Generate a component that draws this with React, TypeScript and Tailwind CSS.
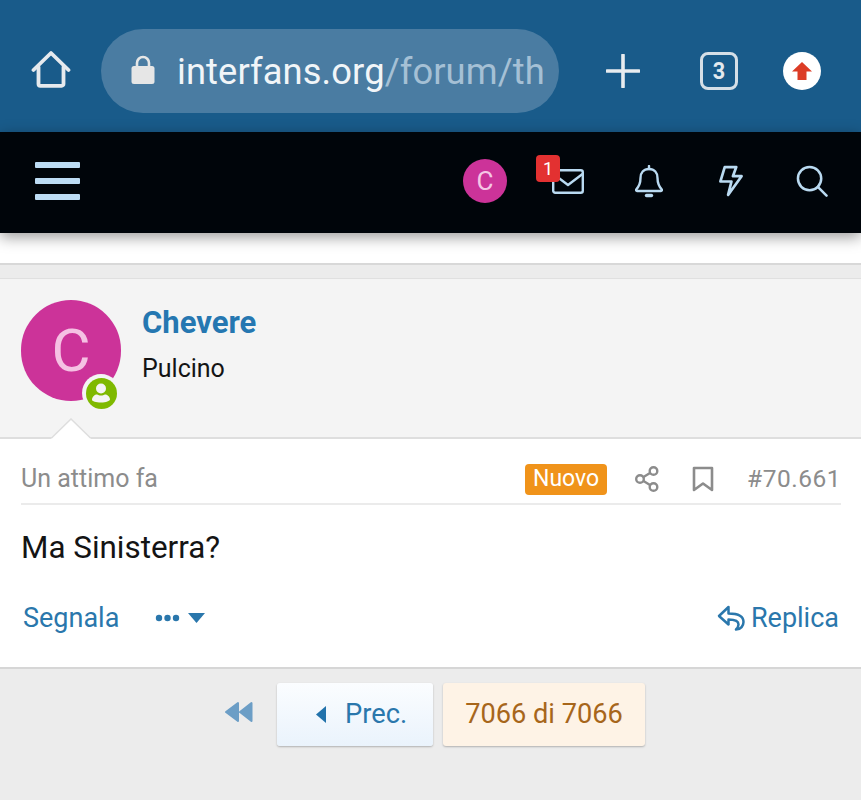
import React from 'react';

function BrowserBar() {
  return (
    <div className="h-[132px] bg-[#195b8a] flex items-center shrink-0 pt-[10px]">
      <div className="w-[101px] flex justify-center">
        <svg width="40" height="40" viewBox="0 0 40 40" fill="none" stroke="#e6eaee" strokeWidth="3.800" strokeLinejoin="round" strokeLinecap="round" className="mt-[-2px]">
          <path d="M2.500 20 20 3l17.500 17" />
          <path d="M7.500 17v17a1.800 1.800 0 0 0 1.800 1.800h21.400a1.800 1.800 0 0 0 1.800-1.800V17" />
        </svg>
      </div>
      <div className="w-[458px] h-[84px] rounded-[42px] bg-[#4a7ca2] flex items-center pl-[30px] overflow-hidden">
        <svg width="24" height="32" viewBox="0 0 24 32" className="shrink-0 mt-[-2px]">
          <path d="M6 14V9a6 6 0 0 1 12 0v5" fill="none" stroke="#e6e6e6" strokeWidth="2.600" />
          <rect x="0.500" y="12" width="23" height="18" rx="2.500" fill="#e6e6e6" />
        </svg>
        <div className="ml-[22px] text-[36.300px] leading-none whitespace-nowrap text-[#f1f5f8] tracking-[0.1px] pt-[3px]">
          interfans.org<span className="text-[#a5c0d5]">/forum/th</span>
        </div>
      </div>
      <div className="w-[128px] flex justify-center">
        <svg width="34" height="34" viewBox="0 0 34 34" stroke="#e8ecef" strokeWidth="3.600" strokeLinecap="round">
          <path d="M17 1v32M1 17h32" />
        </svg>
      </div>
      <div className="w-[38px] h-[38px] rounded-[8px] border-[3.500px] border-[#d5dfe7] flex items-center justify-center text-[#e3e9ee] ml-[13px]">
        <span className="text-[24px] leading-none font-bold scale-x-[0.9]">3</span>
      </div>
      <div className="ml-[45px] w-[38px] h-[38px] rounded-full bg-white flex items-center justify-center">
        <svg width="20" height="18" viewBox="0 0 20 18">
          <path d="M10 0 20 9.500h-5.500V18h-9V9.500H0z" fill="#dc3c26" />
        </svg>
      </div>
    </div>
  );
}

function NavBar() {
  return (
    <div className="h-[101px] bg-[#00050a] flex items-center shrink-0 relative pb-[3px] shadow-[0_4px_14px_rgba(0,0,0,0.4)]">
      <div className="ml-[35px] w-[45px] flex flex-col gap-[10px]">
        <div className="h-[6px] bg-[#bcdcf4] rounded-[1px]" />
        <div className="h-[6px] bg-[#bcdcf4] rounded-[1px]" />
        <div className="h-[6px] bg-[#bcdcf4] rounded-[1px]" />
      </div>
      <div className="ml-[383px] w-[44px] h-[44px] rounded-full bg-[#cc3399] text-[#f5c6e5] text-[26px] flex items-center justify-center">
        C
      </div>
      <div className="relative ml-[45px] w-[32px] h-[25px]">
        <svg width="32" height="25" viewBox="0 0 32 25" fill="none" stroke="#b9daf1" strokeWidth="2.400" strokeLinejoin="round">
          <rect x="1.200" y="1.200" width="29.600" height="22.600" rx="2" />
          <path d="M1.500 5 16 16 30.500 5" />
        </svg>
        <div className="absolute left-[-16px] top-[-14px] w-[24px] h-[27px] rounded-[4px] bg-[#e33131] text-white text-[18px] flex items-center justify-center">
          1
        </div>
      </div>
      <div className="ml-[51px]">
        <svg width="28" height="33" viewBox="0 0 28 33" fill="none" stroke="#b9daf1" strokeWidth="2.400" strokeLinejoin="round" strokeLinecap="round">
          <path d="M14 4c-5.500 0-8.500 4-8.500 9 0 6-2 9-4.300 11.500-.5.6 0 1.500.8 1.500h24c.8 0 1.300-.9.800-1.500C24.500 22 22.500 19 22.500 13c0-5-3-9-8.500-9z" />
          <path d="M14 1v3" />
          <path d="M11.500 30.500h5" strokeWidth="3.400" />
        </svg>
      </div>
      <div className="ml-[55px]">
        <svg width="25" height="32" viewBox="0 0 26 33" fill="none" stroke="#b9daf1" strokeWidth="2.800" strokeLinejoin="round" strokeLinecap="round">
          <path d="M7 2h12l-3.500 9.500H24.500L10.500 31l3.500-14H2.500z" />
        </svg>
      </div>
      <div className="ml-[53px]">
        <svg width="32" height="32" viewBox="0 0 33 33" fill="none" stroke="#b9daf1" strokeWidth="2.600" strokeLinecap="round">
          <circle cx="14" cy="14" r="12" />
          <path d="M22.500 22.500 31.500 31.500" />
        </svg>
      </div>
    </div>
  );
}

function PostHeader() {
  return (
    <div className="h-[160px] bg-[#f4f4f4] border-b-2 border-[#dedede] flex relative shrink-0">
      <div className="ml-[21px] mt-[21px] relative w-[100px] h-[101px] rounded-full bg-[#cc3399] text-[#f5c1e3] text-[60px] flex items-center justify-center">
        C
        <div className="absolute left-[61px] top-[74px] w-[38px] h-[38px] rounded-full bg-[#f4f4f4] flex items-center justify-center">
          <div className="w-[31px] h-[31px] rounded-full bg-[#7fb900] flex items-center justify-center">
            <svg width="20" height="22" viewBox="0 0 20 22" fill="#f4f4f4">
              <circle cx="10" cy="6.500" r="5" />
              <path d="M1 18c0-3.500 3-5.500 5-5.500 1 .5 2.500 1 4 1s3-.5 4-1c2 0 5 2 5 5 0 1.500-4 3-9 3s-9-1.500-9-2.500z" />
            </svg>
          </div>
        </div>
      </div>
      <div className="ml-[21px] mt-[25px]">
        <div className="text-[31px] leading-[38px] font-bold text-[#2577b1]">Chevere</div>
        <div className="text-[25px] leading-[28px] mt-[13px] text-[#141414]">Pulcino</div>
      </div>
      <svg width="40" height="21" viewBox="0 0 40 21" className="absolute left-[51px] bottom-[-2px]">
        <path d="M0 21 20 1l20 20z" fill="#ffffff" />
        <path d="M0.500 20 20 1l19.500 19" fill="none" stroke="#dedede" strokeWidth="1.500" />
      </svg>
    </div>
  );
}

function PostBody() {
  return (
    <div className="h-[230px] bg-white pl-[21px] pr-[20px] border-b-2 border-[#d6d6d6] shrink-0">
      <div className="h-[66px] border-b-2 border-[#ebebeb] flex items-center pt-[16px]">
        <div className="text-[25px] text-[#8c8c8c]">Un attimo fa</div>
        <div className="ml-auto w-[82px] h-[31px] rounded-[4px] bg-[#f0931a] text-white text-[23px] flex items-center justify-center">
          Nuovo
        </div>
        <svg width="24" height="26" viewBox="0 0 24 26" fill="none" stroke="#8c8c8c" strokeWidth="2.400" className="ml-[28px]">
          <circle cx="18.500" cy="5" r="3.800" />
          <circle cx="5" cy="13" r="3.800" />
          <circle cx="18.500" cy="21" r="3.800" />
          <path d="M8.500 11 15 7M8.500 15l6.500 4" />
        </svg>
        <svg width="22" height="26" viewBox="0 0 22 26" fill="none" stroke="#8c8c8c" strokeWidth="2.600" strokeLinejoin="round" className="ml-[33px]">
          <path d="M2 2h18v22l-9-6.500L2 24z" />
        </svg>
        <div className="ml-[33px] text-[24.500px] text-[#8c8c8c] tracking-[0.5px]">#70.661</div>
      </div>
      <div className="text-[31.400px] leading-[36px] mt-[25px] text-[#141414]">Ma Sinisterra?</div>
      <div className="flex items-center mt-[34px] text-[#2a77ac] text-[27px] leading-[36px] pl-[2px]">
        <span>Segnala</span>
        <svg width="25" height="8" viewBox="0 0 25 8" fill="#2a77ac" className="ml-[36px]">
          <circle cx="4" cy="4" r="3.200" />
          <circle cx="12.500" cy="4" r="3.200" />
          <circle cx="21" cy="4" r="3.200" />
        </svg>
        <svg width="17" height="10" viewBox="0 0 17 10" fill="#2a77ac" className="ml-[8px]">
          <path d="M0 0h17L8.500 10z" />
        </svg>
        <svg width="28" height="26" viewBox="0 0 28 26" fill="none" stroke="#2a77ac" strokeWidth="2.500" strokeLinejoin="round" strokeLinecap="round" className="ml-auto">
          <path d="M11.500 2 2 11l9.500 8.500v-5c5 0 10 .5 10 5 0 2-1 3.500-2.500 5 5 0 7.500-4 7.500-7.500 0-6.500-6-8.500-15-8.500z" />
        </svg>
        <span className="ml-[6px] mr-[2px]">Replica</span>
      </div>
    </div>
  );
}

function Pager() {
  return (
    <div className="flex-1 bg-[#ececec] flex items-start pt-[14px]">
      <svg width="29" height="22" viewBox="0 0 29 22" fill="#6c9ec6" stroke="#6c9ec6" strokeWidth="2" strokeLinejoin="round" className="ml-[224px] mt-[18px]">
        <path d="M14 2v18L2 11zM27.500 2v18L16 11z" />
      </svg>
      <div className="ml-[24px] w-[156px] h-[63px] rounded-[3px] bg-gradient-to-b from-[#fbfdff] to-[#eaf3fc] shadow-[0_1px_2px_rgba(0,0,0,0.25)] flex items-center text-[#2a77ac] text-[27.300px] pl-[39px]">
        <svg width="10" height="17" viewBox="0 0 10 17" fill="#2272ab">
          <path d="M10 0v17L0 8.500z" />
        </svg>
        <span className="ml-[19px]">Prec.</span>
      </div>
      <div className="ml-[10px] w-[202px] h-[63px] rounded-[3px] bg-[#fef3e6] shadow-[0_1px_2px_rgba(0,0,0,0.25)] flex items-center justify-center text-[#a7661b] text-[27.200px]">
        7066 di 7066
      </div>
    </div>
  );
}

export default function App() {
  return (
    <div className="w-[861px] h-[800px] flex flex-col overflow-hidden font-['Roboto',sans-serif] bg-white">
      <BrowserBar />
      <NavBar />
      <div className="h-[32px] bg-white border-b-2 border-[#d8d8d8] shrink-0" />
      <div className="h-[14px] bg-[#ececec] border-b border-[#e0e0e0] shrink-0" />
      <PostHeader />
      <PostBody />
      <Pager />
    </div>
  );
}
